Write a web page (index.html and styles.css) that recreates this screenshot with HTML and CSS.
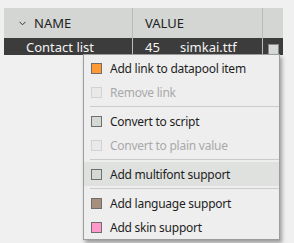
FILE: index.html
```html
<!DOCTYPE html>
<html lang="en">
<head>
    <meta charset="UTF-8">
    <title>Grid context menu</title>
    <link rel="stylesheet" href="styles.css">
</head>
<body>
    <div class="grid">
        <div class="row head">
            <div class="cell name">
                <svg class="chev" width="7" height="5" viewBox="0 0 7 5"><path d="M0.5 0.8 L3.5 3.8 L6.5 0.8" fill="none" stroke="#333" stroke-width="1"/></svg>
                NAME
            </div>
            <div class="cell value">VALUE</div>
            <div class="cell check"></div>
        </div>
        <div class="row selected">
            <div class="cell name">Contact list</div>
            <div class="cell value"><span class="num">45</span><span>simkai.ttf</span></div>
            <div class="cell check"><span class="box"></span></div>
        </div>
    </div>

    <!-- context menu -->
    <div class="menu">
        <div class="menu-item"><span class="icon orange"></span>Add link to datapool item</div>
        <div class="menu-item disabled"><span class="icon"></span>Remove link</div>
        <div class="sep"></div>
        <div class="menu-item"><span class="icon gray"></span>Convert to script</div>
        <div class="menu-item disabled"><span class="icon"></span>Convert to plain value</div>
        <div class="sep"></div>
        <div class="menu-item hover"><span class="icon gray"></span>Add multifont support</div>
        <div class="sep"></div>
        <div class="menu-item"><span class="icon brown"></span>Add language support</div>
        <div class="menu-item"><span class="icon pink"></span>Add skin support</div>
    </div>
</body>
</html>
```

FILE: styles.css
```css
body {
    margin: 0;
    padding: 8px 0 0 4px;
    background: #f0f0f0;
    font-family: 'Noto Sans', 'Open Sans', sans-serif;
    position: relative;
    height: 235px;
    overflow: hidden;
}
.grid {
    width: 279px;
}
.row {
    display: flex;
}
.head {
    height: 30px;
    background: #d3d6d3;
    color: #222222;
    font-size: 13px;
}
.selected {
    height: 17px;
    background: #3c3c3c;
    color: #f4f4f4;
    font-size: 13px;
}
.cell {
    display: flex;
    align-items: center;
    border-right: 1px solid #b9bcb9;
}
.selected .cell {
    border-right-color: #bcbcbc;
}
.name {
    width: 128px;
    padding-left: 0;
}
.head .name {
    padding-left: 15px;
    width: 113px;
}
.chev {
    margin-right: 8px;
    margin-top: 1px;
}
.selected .name {
    padding-left: 22px;
    width: 106px;
}
.value {
    width: 117px;
    padding-left: 12px;
}
.num {
    width: 35px;
}
.check {
    width: 19px;
    border-right: none;
    justify-content: center;
}
.box {
    width: 9px;
    height: 9px;
    border: 1px solid #8a8a8a;
    background: #d6dad6;
    margin-top: 5px;
    margin-left: 1px;
}
.menu {
    position: absolute;
    left: 83px;
    top: 54px;
    width: 195px;
    padding: 1px 0 0;
    background: #eeeeee;
    border: 1px solid #9c9c9c;
    box-shadow: 2px 3px 4px rgba(0, 0, 0, 0.35);
    font-size: 12px;
    letter-spacing: -0.25px;
    color: #1e1e1e;
}
.menu-item {
    height: 24px;
    display: flex;
    align-items: center;
    padding-left: 7px;
}
.menu-item.hover {
    background: #dfe1df;
}
.menu-item.disabled {
    color: #a9a9a9;
}
.icon {
    width: 9px;
    height: 9px;
    border: 1px solid #6e6e6e;
    margin-right: 8px;
    flex-shrink: 0;
}
.disabled .icon {
    border-color: #d2d2d2;
    background: #e9e9e9;
}
.orange { background: #ff9933; }
.gray { background: #d4d9d4; }
.brown { background: #a78f7e; }
.pink { background: #ff99cc; }
.sep {
    height: 1px;
    margin: 2px 0 2px 6px;
    background: #cbcbcb;
}
```
